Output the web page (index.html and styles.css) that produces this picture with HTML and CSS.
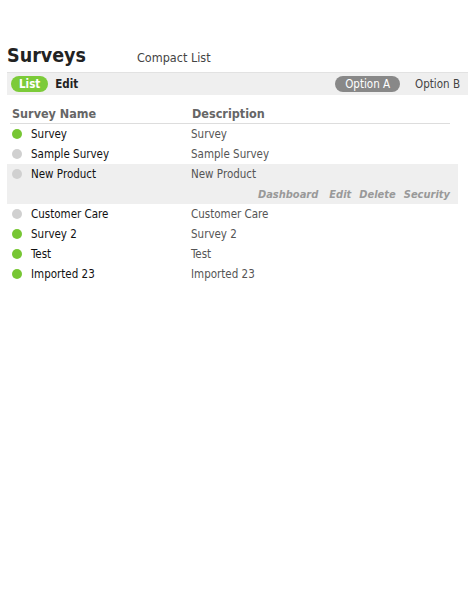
FILE: index.html
```html
<!DOCTYPE html>
<html>
<head>
<meta charset="utf-8">
<link rel="stylesheet" href="styles.css">
</head>
<body>
<div class="page">
  <div class="head">
    <h1 class="title">Surveys</h1>
    <span class="subtitle">Compact List</span>
  </div>
  <div class="toolbar">
    <div class="tabs">
      <span class="pill green">List</span>
      <span class="tab">Edit</span>
    </div>
    <div class="tabs">
      <span class="pill gray">Option A</span>
      <span class="tab light">Option B</span>
    </div>
  </div>
  <div class="table">
    <div class="thead">
      <span class="c1">Survey Name</span>
      <span class="c2">Description</span>
    </div>
    <div class="row"><span class="dot on"></span><span class="name">Survey</span><span class="desc">Survey</span></div>
    <div class="row"><span class="dot"></span><span class="name">Sample Survey</span><span class="desc">Sample Survey</span></div>
    <div class="sel">
      <div class="row"><span class="dot"></span><span class="name">New Product</span><span class="desc">New Product</span></div>
      <div class="actions"><span>Dashboard</span><span>Edit</span><span>Delete</span><span>Security</span></div>
    </div>
    <div class="row"><span class="dot"></span><span class="name">Customer Care</span><span class="desc">Customer Care</span></div>
    <div class="row"><span class="dot on"></span><span class="name">Survey 2</span><span class="desc">Survey 2</span></div>
    <div class="row"><span class="dot on"></span><span class="name">Test</span><span class="desc">Test</span></div>
    <div class="row"><span class="dot on"></span><span class="name">Imported 23</span><span class="desc">Imported 23</span></div>
  </div>
</div>
</body>
</html>
```
FILE: styles.css
```css
body {
  margin: 0;
  background: #fff;
  font-family: "DejaVu Sans Condensed", "DejaVu Sans", sans-serif;
  color: #222;
}
.page {
  padding: 44px 2px 0 7px;
}
.head {
  display: flex;
  align-items: baseline;
  height: 28px;
}
.title {
  margin: 0;
  font-size: 19.5px;
  font-weight: bold;
  color: #222;
  width: 130px;
}
.subtitle {
  font-size: 12.5px;
  color: #444;
}
.toolbar {
  display: flex;
  justify-content: space-between;
  align-items: center;
  height: 22px;
  background: #efefef;
  border-top: 1px solid #e2e2e2;
  padding: 0 8px 0 4px;
}
.tabs {
  display: flex;
  align-items: center;
}
.pill {
  display: inline-block;
  height: 16px;
  line-height: 16px;
  border-radius: 8px;
  color: #fff;
  font-size: 11.5px;
  padding: 0 8px;
}
.pill.green {
  background: #7ccb39;
  font-weight: bold;
}
.pill.gray {
  background: #888;
  padding: 0 10px;
}
.tab {
  font-size: 11.5px;
  font-weight: bold;
  color: #222;
  margin-left: 7px;
}
.tab.light {
  font-weight: normal;
  color: #444;
  margin-left: 15px;
}
.table {
  width: 451px;
  padding-top: 9px;
}
.thead {
  display: flex;
  margin: 0 8px 0 3px;
  padding: 1px 0 2px 2px;
  border-bottom: 1px solid #ddd;
  font-size: 12.5px;
  font-weight: bold;
  color: #666;
  height: 16px;
  align-items: center;
}
.thead .c1 {
  width: 180px;
}
.row {
  display: flex;
  align-items: center;
  height: 20px;
  font-size: 11.5px;
}
.dot {
  width: 10px;
  height: 10px;
  border-radius: 50%;
  background: #d0d0d0;
  margin: 0 9px 0 5px;
}
.dot.on {
  background: #77c634;
}
.name {
  width: 160px;
  color: #111;
}
.desc {
  color: #555;
}
.sel {
  background: #efefef;
}
.actions {
  display: flex;
  justify-content: flex-end;
  gap: 8px;
  height: 20px;
  align-items: center;
  padding-right: 8px;
  font-size: 11px;
  font-style: italic;
  font-weight: bold;
  color: #999;
}
.actions span:first-child {
  margin-right: 3px;
}
```
